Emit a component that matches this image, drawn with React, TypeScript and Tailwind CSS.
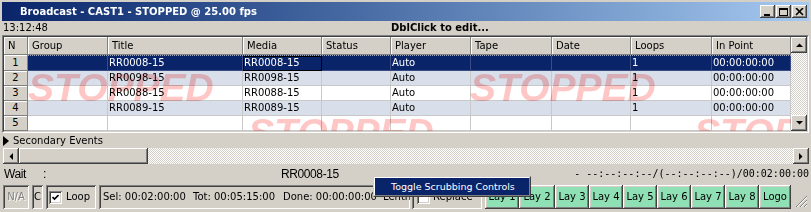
import React from "react";

// classic 3D edges
const raised =
  "shadow-[inset_-1px_-1px_#404040,inset_1px_1px_#ffffff,inset_-2px_-2px_#808080,inset_2px_2px_#d4d0c8]";
const sunken =
  "shadow-[inset_1px_1px_#808080,inset_-1px_-1px_#ffffff,inset_2px_2px_#404040,inset_-2px_-2px_#d4d0c8]";
const checker =
  "bg-[repeating-conic-gradient(#ffffff_0%_25%,#d4d0c8_0%_50%)] bg-[length:2px_2px]";

const columns = [
  { name: "Group", w: "w-[80px]" },
  { name: "Title", w: "w-[135px]" },
  { name: "Media", w: "w-[79px]" },
  { name: "Status", w: "w-[69px]" },
  { name: "Player", w: "w-[80px]" },
  { name: "Tape", w: "w-[81px]" },
  { name: "Date", w: "w-[79px]" },
  { name: "Loops", w: "w-[81px]" },
  { name: "In Point", w: "w-[79px]" },
];

const rows = [
  ["", "RR0008-15", "RR0008-15", "", "Auto", "", "", "1", "00:00:00:00"],
  ["", "RR0098-15", "RR0098-15", "", "Auto", "", "", "1", "00:00:00:00"],
  ["", "RR0088-15", "RR0088-15", "", "Auto", "", "", "1", "00:00:00:00"],
  ["", "RR0089-15", "RR0089-15", "", "Auto", "", "", "1", "00:00:00:00"],
  ["", "", "", "", "", "", "", "", ""],
];

const rowBg = ["bg-[#0a246a] text-white", "bg-[#d9dfea]", "bg-white", "bg-[#d9dfea]", "bg-white"];

const stamps = [
  "left-[24px] top-[13px]",
  "left-[244px] top-[58px]",
  "left-[466px] top-[13px]",
  "left-[690px] top-[58px]",
];

const layers = ["Lay 1", "Lay 2", "Lay 3", "Lay 4", "Lay 5", "Lay 6", "Lay 7", "Lay 8", "Logo"];

function Arrow({ dir }: { dir: "up" | "down" | "left" | "right" }) {
  const pts = {
    up: "0,4 7,4 3.5,0.5",
    down: "0,0 7,0 3.5,3.5",
    left: "4,0 4,7 0.5,3.5",
    right: "0,0 0,7 3.5,3.5",
  }[dir];
  const box = dir === "up" || dir === "down" ? "0 0 7 4" : "0 0 4 7";
  const size = dir === "up" || dir === "down" ? "w-[7px] h-[4px]" : "w-[4px] h-[7px]";
  return (
    <svg viewBox={box} className={size}>
      <polygon points={pts} fill="#000" />
    </svg>
  );
}

function ScrollBtn({ dir }: { dir: "up" | "down" | "left" | "right" }) {
  return (
    <div className={`w-[16px] h-[16px] shrink-0 bg-[#d4d0c8] flex items-center justify-center ${raised}`}>
      <Arrow dir={dir} />
    </div>
  );
}

function CheckBox() {
  return (
    <div className={`w-[13px] h-[13px] bg-white flex items-center justify-center ${sunken}`}>
      <svg viewBox="0 0 7 7" className="w-[7px] h-[7px]">
        <polyline points="0.5,3 2.5,5 6.5,1" fill="none" stroke="#000" strokeWidth="1.6" />
      </svg>
    </div>
  );
}

function TitleButton({ kind }: { kind: "min" | "max" | "close" }) {
  return (
    <div className={`w-[15px] h-[13px] bg-[#d4d0c8] flex items-center justify-center ${raised}`}>
      <svg viewBox="0 0 9 8" className="w-[9px] h-[8px]">
        {kind === "min" && <rect x="1" y="6" width="6" height="2" fill="#000" />}
        {kind === "max" && (
          <path d="M0 0h9v8H0z M1 2v5h7V2z" fill="#000" fillRule="evenodd" />
        )}
        {kind === "close" && (
          <path d="M1 0 L8 7 M8 0 L1 7" stroke="#000" strokeWidth="1.6" />
        )}
      </svg>
    </div>
  );
}

export default function App() {
  return (
    <div className="relative w-[811px] h-[212px] overflow-hidden bg-[#d4d0c8] text-black text-[10px] leading-none font-['DejaVu_Sans',sans-serif] flex flex-col pt-[2px] px-[2px]">
      {/* title bar */}
      <div className="h-[19px] shrink-0 bg-linear-to-r from-[#0a246a] to-[#a6caf0] flex items-center pl-[18px] pr-[2px]">
        <span className="text-white font-bold text-[10px]">Broadcast - CAST1 - STOPPED @ 25.00 fps</span>
        <div className="ml-auto flex">
          <TitleButton kind="min" />
          <div className="ml-[1px]">
            <TitleButton kind="max" />
          </div>
          <div className="ml-[1px]">
            <TitleButton kind="close" />
          </div>
        </div>
      </div>

      {/* info line */}
      <div className="h-[14px] shrink-0 flex items-center">
        <span className="w-[389px] pl-[1px]">13:12:48</span>
        <span className="font-bold">DblClick to edit...</span>
      </div>

      {/* grid */}
      <div className="h-[98px] shrink-0 border border-t-[#808080] border-l-[#808080] border-r-white border-b-white">
        <div className="h-full border border-t-[#404040] border-l-[#404040] border-r-[#d4d0c8] border-b-[#d4d0c8] flex">
          <div className="w-[787px] flex flex-col">
            <div className="h-[18px] flex shrink-0">
              <div className="w-[24px] h-full bg-[#d4d0c8] border-r border-b border-[#808080] shadow-[inset_1px_1px_#ffffff] pl-[4px] flex items-center">
                N
              </div>
              {columns.map((c) => (
                <div
                  key={c.name}
                  className={`${c.w} h-full bg-[#d4d0c8] border-r border-b border-[#808080] shadow-[inset_1px_1px_#ffffff] pl-[4px] flex items-center`}
                >
                  {c.name}
                </div>
              ))}
            </div>
            <div className="relative flex-1 overflow-hidden bg-white">
              {rows.map((r, i) => (
                <div key={i} className={`flex ${i === 0 ? "h-[16px] relative z-10" : "h-[15px]"}`}>
                  <div className="relative z-10 w-[24px] h-full bg-[#d4d0c8] border-r border-b border-[#808080] shadow-[inset_1px_1px_#ffffff] flex items-center justify-center">
                    {i + 1}
                  </div>
                  <div
                    className={`flex h-full ${rowBg[i]} ${
                      i === 0 ? "border-t border-dotted border-t-[#a0a8c8]" : ""
                    }`}
                  >
                    {columns.map((c, j) => (
                      <div
                        key={c.name}
                        className={`${c.w} h-full border-r border-b whitespace-nowrap overflow-hidden pl-[1px] flex items-center ${
                          i === 0 ? "border-[#3a4c84]" : "border-[#c8c8c8]"
                        } ${i === 0 && j === 2 ? "outline outline-1 -outline-offset-1 outline-black" : ""}`}
                      >
                        {r[j]}
                      </div>
                    ))}
                  </div>
                </div>
              ))}
              <div className="absolute inset-0 pointer-events-none mix-blend-multiply">
                {stamps.map((s) => (
                  <span
                    key={s}
                    className={`absolute ${s} text-[39px] leading-[39px] font-bold italic text-[#ffc6c6] font-['Liberation_Sans',Arial,sans-serif]`}
                  >
                    STOPPED
                  </span>
                ))}
              </div>
            </div>
          </div>
          <div className="w-[16px] flex flex-col">
            <ScrollBtn dir="up" />
            <div className={`flex-1 ${checker}`} />
            <ScrollBtn dir="down" />
          </div>
        </div>
      </div>

      {/* secondary events */}
      <div className="h-[15px] shrink-0 flex items-center pl-[1px] pt-[1px]">
        <svg viewBox="0 0 6 10" className="w-[6px] h-[10px]">
          <polygon points="0,0 6,5 0,10" fill="#000" />
        </svg>
        <span className="ml-[4px]">Secondary Events</span>
      </div>

      {/* horizontal scrollbar */}
      <div className="h-[16px] shrink-0 ml-[1px] flex">
        <ScrollBtn dir="left" />
        <div className={`w-[129px] h-full bg-[#d4d0c8] ${raised}`} />
        <div className={`flex-1 ${checker}`} />
        <ScrollBtn dir="right" />
      </div>

      {/* wait line */}
      <div className="h-[20px] shrink-0 flex items-center font-['Liberation_Sans',Arial,sans-serif] text-[12px] tracking-[-0.4px]">
        <span className="w-[41px] pl-[2px]">Wait</span>
        <span className="w-[238px]">:</span>
        <span>RR0008-15</span>
        <span className="ml-auto text-[10px] tracking-normal font-['DejaVu_Sans_Mono',monospace]">
          - --:--:--:--/(--:--:--:--)/00:02:00:00
        </span>
      </div>

      {/* bottom status */}
      <div className="h-[25px] shrink-0 pt-[1px] flex gap-[3px] pl-[1px]">
        <div className={`w-[26px] h-[24px] flex items-center justify-center text-[#808080] [text-shadow:1px_1px_0_#ffffff] ${sunken}`}>
          N/A
        </div>
        <div className={`w-[11px] h-[24px] flex items-center justify-center ${sunken}`}>C</div>
        <div className={`w-[50px] h-[24px] flex items-center pl-[3px] gap-[4px] ${sunken}`}>
          <CheckBox />
          <span>Loop</span>
        </div>
        <div className={`w-[311px] h-[24px] flex items-center pl-[4px] overflow-hidden whitespace-nowrap ${sunken}`}>
          <span className="w-[90px] shrink-0">Sel: 00:02:00:00</span>
          <span className="w-[90px] shrink-0">Tot: 00:05:15:00</span>
          <span className="w-[100px] shrink-0">Done: 00:00:00:00</span>
          <span className="shrink-0">Lenth</span>
        </div>
        <div className={`w-[70px] h-[24px] -ml-[1px] flex items-center pl-[5px] gap-[3px] ${sunken}`}>
          <div className={`w-[13px] h-[13px] bg-white ${sunken}`} />
          <span>Replace</span>
        </div>
        <div className="flex">
          {layers.map((l) => (
            <div
              key={l}
              className={`${l === "Logo" ? "w-[32px]" : l === "Lay 2" ? "w-[36px]" : "w-[34px]"} h-[24px] bg-[#8fe0b4] flex items-center justify-center ${raised}`}
            >
              {l}
            </div>
          ))}
        </div>
        <svg viewBox="0 0 13 13" className="w-[13px] h-[13px] self-end ml-auto mr-[1px] mb-[1px]">
          <path d="M12 1 L1 12 M12 5 L5 12 M12 9 L9 12" stroke="#808080" strokeWidth="1" />
          <path d="M12 2 L2 12 M12 6 L6 12 M12 10 L10 12" stroke="#ffffff" strokeWidth="1" />
        </svg>
      </div>

      {/* context menu */}
      <div className="absolute left-[373px] top-[176px] w-[158px] h-[21px] border border-t-[#d4d0c8] border-l-[#d4d0c8] border-r-[#404040] border-b-[#404040]">
        <div className="h-full border border-t-white border-l-white border-r-[#808080] border-b-[#808080] bg-[#0a246a] flex items-center pl-[16px]">
          <span className="text-white text-[9.5px]">Toggle Scrubbing Controls</span>
        </div>
      </div>
    </div>
  );
}
